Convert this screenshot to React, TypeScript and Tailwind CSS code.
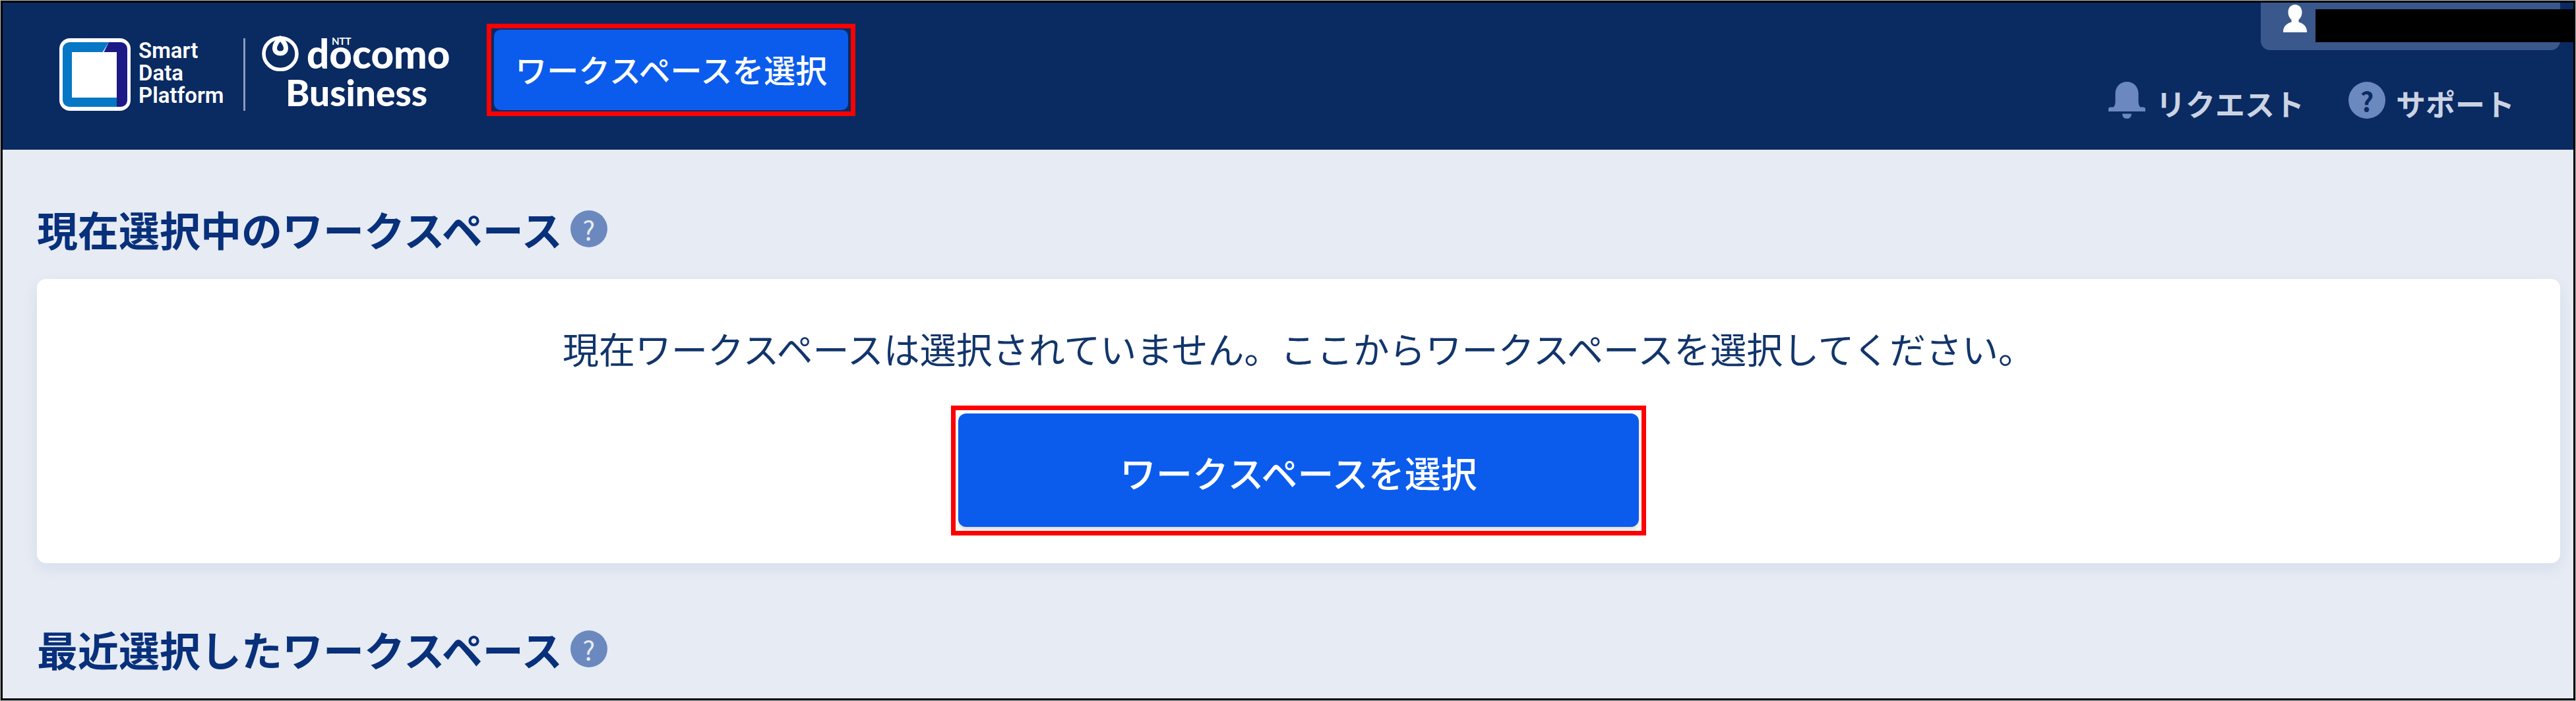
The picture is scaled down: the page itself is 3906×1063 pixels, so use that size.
import { useState } from 'react'
import clsx from 'clsx'

function HelpIcon({ className }: { className?: string }) {
  return (
    <span
      className={clsx(
        'flex size-14 shrink-0 items-center justify-center rounded-full bg-[#6b89bf] text-[40px] leading-none',
        className,
      )}
    >
      ?
    </span>
  )
}

function BellIcon() {
  return (
    <svg viewBox="0 0 56 56" className="size-14 shrink-0 fill-[#6b89bf]" aria-hidden="true">
      <path d="M28 0C17.500 0 10.500 8 10.500 18v11c0 5-1 7.500-3 9.500H3c-2 0-3 1-3 3V45h56v-3.500c0-2-1-3-3-3h-4.500c-2-2-3-4.500-3-9.500V18C45.500 8 38.500 0 28 0z" />
      <path d="M21 48.500h14c0 4.500-2.500 7.500-7 7.500s-7-3-7-7.500z" />
    </svg>
  )
}

function UserIcon() {
  return (
    <svg viewBox="0 0 36 42" className="h-[42px] w-9 shrink-0 fill-white" aria-hidden="true">
      <path d="M18 0c6.500 0 10.500 5 10.500 11.500 0 5-2 9-5 11.500v3.500C30 28 36 33 36 41v1H0v-1c0-8 6-13 12.500-14.500V23c-3-2.500-5-6.500-5-11.500C7.500 5 11.500 0 18 0z" />
    </svg>
  )
}

function Logo() {
  return (
    <a href="#home" className="flex items-center text-white">
      <svg viewBox="0 0 108 110" className="h-[110px] w-[108px]" aria-hidden="true">
        <rect width="108" height="110" rx="16" fill="#fff" />
        <path d="M16 6h59L65 22v66h22v16H16C10 104 5 100 5 93V17C5 10 10 6 16 6z" fill="#0577c4" />
        <path d="M75 6h17c7 0 11 4 11 11v76c0 7-4 11-11 11h-5V22H67z" fill="#1c1a86" />
        <rect x="19" y="21" width="68" height="69" fill="#fff" />
      </svg>
      <span className="ml-3 w-[132px] pb-1 font-[Roboto,sans-serif] text-[33px] leading-[34px] font-semibold">
        Smart
        <br />
        Data
        <br />
        Platform
      </span>
      <span className="ml-[27px] h-[110px] w-[3px] bg-[#8b9bbb]" />
      <span className="ml-[25px] flex flex-col pb-1 font-[Lato,sans-serif] font-bold">
        <span className="flex items-center gap-3">
          <svg viewBox="0 0 56 54" className="h-[54px] w-14" fill="none" stroke="#fff" aria-hidden="true">
            <ellipse cx="28" cy="27.500" rx="25" ry="24" strokeWidth="5.500" />
            <path
              d="M28 4C23 9 19.500 13 19.500 19c0 5 3.500 8 8.500 8s8.500-3 8.500-8C36.500 13 33 9 28 4z"
              strokeWidth="7"
              strokeLinejoin="round"
            />
          </svg>
          <span className="relative text-[60px] leading-[58px] font-black">
            docomo
            <span className="absolute top-0 left-[38px] text-[15px] leading-5 font-bold">NTT</span>
          </span>
        </span>
        <span className="pl-9 text-[55px] leading-[60px] font-black">Business</span>
      </span>
    </a>
  )
}

function SectionTitle({ children }: { children: string }) {
  return (
    <div className="flex items-center gap-3">
      <h2 className="text-[62px] leading-[80px] font-bold text-[#08307b]">{children}</h2>
      <HelpIcon className="text-[#e6ebf4]" />
    </div>
  )
}

export default function App() {
  const [, setIsSelectorOpen] = useState(false)
  const openSelector = () => setIsSelectorOpen(true)

  return (
    <div className="min-h-screen border border-[#b9c0bd] font-['Noto_Sans_CJK_JP',sans-serif]">
      <div className="min-h-[1061px] border-[3px] border-black bg-[#e6ebf4]">
        <header className="flex items-start justify-between bg-[#0a2a62]">
          <div className="flex items-start pt-8 pb-[51px] pl-[86px]">
            <div className="pt-4">
              <Logo />
            </div>
            <div className="ml-14 border-[7px] border-[#f00] px-1 py-[2px]">
              <button
                onClick={openSelector}
                className="block rounded-[10px] bg-[#0b5cec] px-8 pt-[26px] pb-[30px] text-[48px] leading-[66px] font-medium text-white"
              >
                ワークスペースを選択
              </button>
            </div>
          </div>

          <div className="flex flex-col items-end pr-5">
            <button
              aria-label="アカウント"
              className="flex h-[72px] w-[454px] items-start rounded-b-[14px] bg-[#3b588c] pt-[3px] pl-[34px]"
            >
              <UserIcon />
              <span className="mt-[7px] -mr-5 ml-[13px] h-[50px] flex-1 bg-black" />
            </button>
            <nav className="mt-12 mr-[69px] flex gap-[67px] text-[45px] leading-[66px] font-bold text-[#cbd3e3]">
              <a href="#requests" className="flex gap-4">
                <BellIcon />
                <span>リクエスト</span>
              </a>
              <a href="#support" className="flex gap-4">
                <HelpIcon className="text-[#0a2a62]" />
                <span>サポート</span>
              </a>
            </nav>
          </div>
        </header>

        <main className="px-5 pt-20 pl-[52px]">
          <SectionTitle>現在選択中のワークスペース</SectionTitle>

          <section className="mt-9 mb-[90px] flex flex-col items-center rounded-[14px] bg-white pt-16 pb-[42px] shadow-[0_8px_24px_rgba(20,50,110,0.07)]">
            <p className="text-[55px] leading-[80px] text-[#12356b]">
              現在ワークスペースは選択されていません。ここからワークスペースを選択してください。
            </p>
            <div className="mt-12 border-[7px] border-[#f00] px-1 pt-[5px] pb-[6px]">
              <button
                onClick={openSelector}
                className="block w-[1032px] rounded-[12px] bg-[#0b5cec] pt-12 pb-11 text-[55px] leading-[80px] font-medium text-white shadow-[0_4px_6px_rgba(0,0,0,0.15)]"
              >
                ワークスペースを選択
              </button>
            </div>
          </section>

          <SectionTitle>最近選択したワークスペース</SectionTitle>
        </main>
      </div>
    </div>
  )
}
